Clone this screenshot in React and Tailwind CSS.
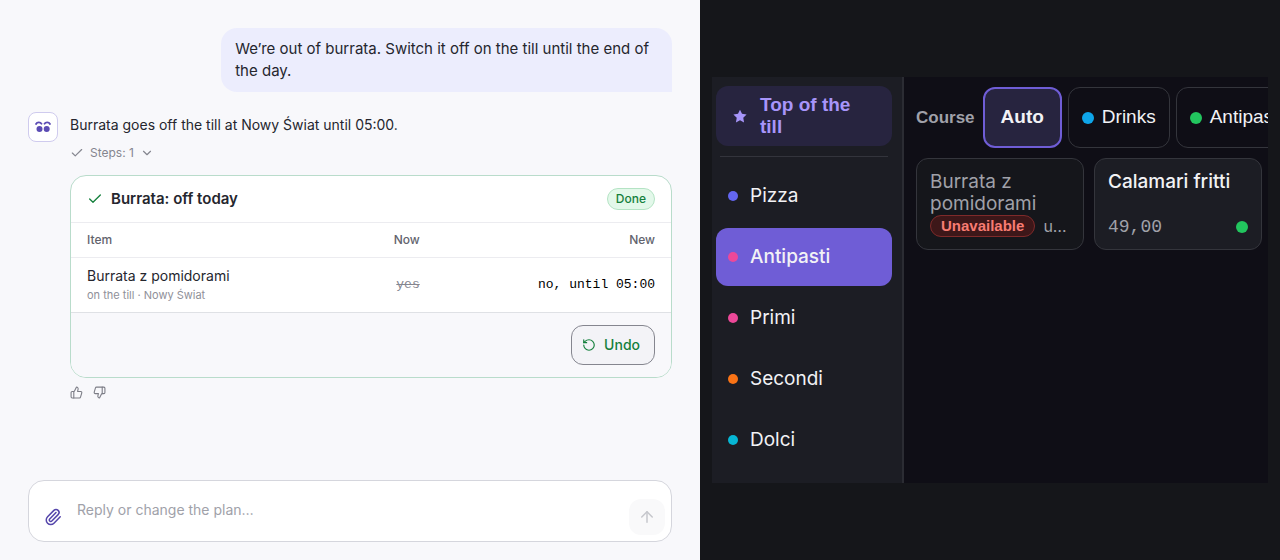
import { useState } from "react";
import {
  ArrowUp,
  Check,
  ChevronDown,
  Paperclip,
  RotateCcw,
  ThumbsDown,
  ThumbsUp,
} from "lucide-react";

const CATEGORIES = [
  { name: "Pizza", dot: "bg-[#6366f1]" },
  { name: "Antipasti", dot: "bg-[#ec4899]" },
  { name: "Primi", dot: "bg-[#ec4899]" },
  { name: "Secondi", dot: "bg-[#f97316]" },
  { name: "Dolci", dot: "bg-[#06b6d4]" },
];

const COURSES = [
  { name: "Auto" },
  { name: "Drinks", dot: "bg-[#0ea5e9]" },
  { name: "Antipasti", dot: "bg-[#22c55e]" },
];

const App = () => (
  <div className="grid min-h-screen grid-cols-[35fr_29fr] font-[Inter,'Liberation_Sans',sans-serif]">
    <Chat />
    <Till />
  </div>
);

const Chat = () => {
  const [reply, setReply] = useState("");

  return (
    <main className="flex min-w-0 flex-col bg-[#f8f8fb] p-7 pb-[18px] text-sm leading-[22px] text-[#25262e]">
      <p className="w-[70%] self-end rounded-2xl rounded-br-none bg-[#ecedfd] px-3.5 py-2.5 text-[15px] leading-[22px]">
        We’re out of burrata. Switch it off on the till until the end of the
        day.
      </p>

      <div className="mt-5 flex gap-3">
        <Avatar />
        <div className="min-w-0 flex-1 pt-0.5">
          <p>Burrata goes off the till at Nowy Świat until 05:00.</p>
          <button className="mt-2 flex items-center gap-1.5 text-xs leading-[18px] text-[#85868f]">
            <Check className="size-3.5" />
            Steps: 1
            <ChevronDown className="size-3.5" />
          </button>
          <ChangeCard />
          <div className="mt-2 flex gap-2.5 text-[#7c7d86]">
            <button aria-label="Good answer">
              <ThumbsUp className="size-[13px]" />
            </button>
            <button aria-label="Bad answer">
              <ThumbsDown className="size-[13px]" />
            </button>
          </div>
        </div>
      </div>

      <form
        onSubmit={(e) => e.preventDefault()}
        className="mt-auto flex items-end rounded-2xl border border-[#d5d6dd] bg-white p-1.5"
      >
        <button
          type="button"
          aria-label="Attach a file"
          className="flex size-9 items-center justify-center text-[#5546ab]"
        >
          <Paperclip className="size-[18px]" />
        </button>
        <input
          aria-label="Reply"
          value={reply}
          onChange={(e) => setReply(e.target.value)}
          placeholder="Reply or change the plan…"
          className="h-12 min-w-0 flex-1 px-1.5 pb-1 outline-none placeholder:text-[#a0a1a9]"
        />
        <button
          aria-label="Send"
          disabled={!reply}
          className="flex size-9 items-center justify-center rounded-xl bg-[#f9f9fa] text-[#c6c7cc]"
        >
          <ArrowUp className="size-[18px]" />
        </button>
      </form>
    </main>
  );
};

const Avatar = () => (
  <div className="flex size-[30px] shrink-0 items-center justify-center rounded-lg border border-[#cfcbee] bg-white">
    <svg viewBox="0 0 18 14" className="h-3.5 w-[18px]" aria-hidden="true">
      <g fill="none" stroke="#5b4cb4" strokeWidth="1.8" strokeLinecap="round">
        <path d="M2 4C3.200 1.800 6.300 1.700 7.500 3.800" />
        <path d="M10.500 3.800C11.700 1.700 14.800 1.800 16 4" />
      </g>
      <circle cx="5.500" cy="9" r="3" fill="#5b4cb4" />
      <circle cx="12.700" cy="9" r="3" fill="#5b4cb4" />
    </svg>
  </div>
);

const ChangeCard = () => (
  <section className="mt-[13px] overflow-hidden rounded-2xl border border-[#b9dccb] bg-white">
    <header className="flex items-center gap-2 px-4 py-3">
      <Check className="size-4 text-[#15803d]" />
      <h2 className="flex-1 text-[15px] leading-[22px] font-semibold">
        Burrata: off today
      </h2>
      <span className="rounded-full border border-[#b4e3c4] bg-[#e3f8ea] px-2 text-xs leading-5 font-medium text-[#15803d]">
        Done
      </span>
    </header>
    <table className="w-full text-right">
      <thead>
        <tr className="border-y border-[#ececf0] text-xs leading-[18px] text-[#62636d]">
          <th className="py-2 pl-4 text-left font-medium">Item</th>
          <th className="py-2 font-medium">Now</th>
          <th className="py-2 pr-4 font-medium">New</th>
        </tr>
      </thead>
      <tbody>
        <tr>
          <td className="pt-[7px] pb-[9px] pl-4 text-left leading-[22px]">
            Burrata z pomidorami
            <div className="text-[11px] leading-4 text-[#8f9099]">
              on the till · Nowy Świat
            </div>
          </td>
          <td className="font-['Liberation_Mono',monospace] text-[13px] text-[#85868f] line-through">
            yes
          </td>
          <td className="pr-4 font-['Liberation_Mono',monospace] text-[13px] text-black">
            no, until 05:00
          </td>
        </tr>
      </tbody>
    </table>
    <footer className="flex justify-end border-t border-[#dfe1e5] bg-[#f8f8fb] px-4 py-3">
      <button className="flex h-10 items-center gap-2 rounded-xl border border-[#85868f] bg-[#f3f3f7] px-2.5 pr-3.5 font-medium text-[#15803d]">
        <RotateCcw className="size-3.5" />
        Undo
      </button>
    </footer>
  </section>
);

const Till = () => {
  const [category, setCategory] = useState("Antipasti");
  const [course, setCourse] = useState("Auto");

  return (
    <aside className="flex min-w-0 items-center bg-[#15161a] px-3 text-[#f2f2f5]">
      <div className="flex min-w-0 flex-1 bg-[#0f0e16]">
        <nav className="w-48 shrink-0 border-r-2 border-[#2b2c33] bg-[#1c1d24] pt-[9px] pr-2.5 pb-3.5 pl-1">
          <button className="flex w-full items-center gap-3 rounded-xl bg-[#27243f] py-2 pr-7 pl-4 text-left font-['Liberation_Sans',Arial,sans-serif] text-[19px] leading-[22px] font-bold text-[#a795fa]">
            <Star />
            Top of the till
          </button>
          <hr className="mx-1 my-2.5 border-[#33343c]" />
          <ul className="flex flex-col gap-[3px]">
            {CATEGORIES.map(({ name, dot }) => (
              <li key={name}>
                <button
                  onClick={() => setCategory(name)}
                  className={`flex h-[58px] w-full items-center gap-3 rounded-xl px-3 text-[19px] ${
                    name === category ? "bg-[#6f5dd6] font-medium" : ""
                  }`}
                >
                  <span className={`size-2.5 rounded-full ${dot}`} />
                  {name}
                </button>
              </li>
            ))}
          </ul>
        </nav>

        <div className="min-w-0 flex-1 pt-2.5 pl-3">
          <div className="flex items-center gap-1.5 overflow-hidden font-['Liberation_Sans',Arial,sans-serif]">
            <span className="mr-0.5 text-[17px] font-bold text-[#a0a1a9]">
              Course
            </span>
            {COURSES.map(({ name, dot }) => (
              <button
                key={name}
                onClick={() => setCourse(name)}
                className={`flex h-[61px] shrink-0 items-center gap-2 rounded-xl text-[19px] ${
                  name === course
                    ? "border-2 border-[#6f5dd6] bg-[#27243f] px-4 font-bold"
                    : "border border-[#34353c] px-[13px]"
                }`}
              >
                {dot && <span className={`size-3 rounded-full ${dot}`} />}
                {name}
              </button>
            ))}
          </div>

          <div className="mt-2.5 grid grid-cols-2 gap-2.5 pr-1.5">
            <button className="flex h-[92px] min-w-0 flex-col rounded-xl border border-[#34353c] bg-[#15161b] px-[13px] pt-3 text-left text-[#a0a1a9]">
              <span className="text-[19px] leading-[22px]">
                Burrata z pomidorami
              </span>
              <span className="flex w-full items-center gap-2">
                <span className="rounded-full border border-[#7f2a2a] bg-[#3d1719] px-2.5 font-['Liberation_Sans',Arial,sans-serif] text-[15px] leading-5 font-bold text-[#f87c72]">
                  Unavailable
                </span>
                <span className="min-w-0 truncate text-base leading-5">
                  until 05:00
                </span>
              </span>
            </button>
            <button className="flex h-[92px] min-w-0 flex-col justify-between rounded-xl border border-[#34353c] bg-[#1c1d24] px-[13px] py-3 text-left">
              <span className="text-[19px] leading-[22px] font-medium">
                Calamari fritti
              </span>
              <span className="flex w-full items-center justify-between font-['Liberation_Mono',monospace] text-lg leading-5 text-[#a0a1a9]">
                49,00
                <span className="size-3 rounded-full bg-[#22c55e]" />
              </span>
            </button>
          </div>
        </div>
      </div>
    </aside>
  );
};

const Star = () => (
  <svg viewBox="0 0 24 24" className="size-4 shrink-0" fill="currentColor">
    <path d="M12 2.500l3 6.300 6.900.9-5 4.900 1.200 7-6.100-3.400-6.100 3.400 1.200-7-5-4.900 6.900-.9z" />
  </svg>
);

export default App;
